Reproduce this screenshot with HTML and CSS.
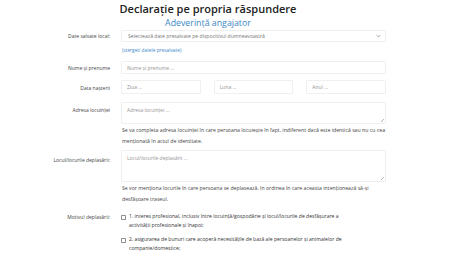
FILE: index.html
```html
<!DOCTYPE html>
<html lang="ro">
<head>
<meta charset="utf-8">
<title>Declarație pe propria răspundere</title>
<link rel="stylesheet" href="styles.css">
</head>
<body>
<div class="page">
  <h1 class="title">Declarație pe propria răspundere</h1>
  <h2 class="subtitle">Adeverință angajator</h2>

  <div class="row row-select">
    <label class="label">Date salvate local:</label>
    <div class="field">
      <div class="select">
        <span>Selectează date presalvate pe dispozitivul dumneavoastră</span>
        <svg class="chev" width="5" height="4" viewBox="0 0 5 4"><path d="M0.6 1 L2.5 2.9 L4.4 1" fill="none" stroke="#666" stroke-width="0.6"/></svg>
      </div>
    </div>
  </div>
  <div class="row row-link">
    <div class="label"></div>
    <div class="field"><a class="link" href="#">(stergeti datele presalvate)</a></div>
  </div>

  <div class="row row-nume">
    <label class="label">Nume și prenume</label>
    <div class="field"><div class="input ph">Nume și prenume ...</div></div>
  </div>

  <div class="row row-data">
    <label class="label">Data nașterii</label>
    <div class="field date">
      <div class="input ph">Ziua ...</div>
      <div class="input ph">Luna ...</div>
      <div class="input ph">Anul ...</div>
    </div>
  </div>

  <div class="row row-adresa">
    <label class="label">Adresa locuinței</label>
    <div class="field"><div class="textarea ta-small ph">Adresa locuinței ...</div></div>
  </div>
  <div class="row">
    <div class="label"></div>
    <div class="field"><p class="help">Se va completa adresa locuinței în care persoana locuiește în fapt, indiferent dacă este identică sau nu cu cea menționată în actul de identitate.</p></div>
  </div>

  <div class="row row-locul">
    <label class="label">Locul/locurile deplasării:</label>
    <div class="field"><div class="textarea ta-big ph">Locul/locurile deplasării ...</div></div>
  </div>
  <div class="row">
    <div class="label"></div>
    <div class="field"><p class="help">Se vor menționa locurile în care persoana se deplasează, în ordinea în care aceasta intenționează să-și desfășoare traseul.</p></div>
  </div>

  <div class="row row-motiv">
    <label class="label">Motivul deplasării:</label>
    <div class="field">
      <div class="check"><span class="box"></span><span class="ctext">1. interes profesional, inclusiv între locuință/gospodărie și locul/locurile de desfășurare a<br>activității profesionale și înapoi;</span></div>
      <div class="check"><span class="box"></span><span class="ctext">2. asigurarea de bunuri care acoperă necesitățile de bază ale persoanelor și animalelor de<br>companie/domestice;</span></div>
    </div>
  </div>
</div>
</body>
</html>
```

FILE: styles.css
```css
html, body {
  margin: 0;
  padding: 0;
  background: #ffffff;
}
body {
  font-family: "Open Sans", "Noto Sans", sans-serif;
  color: #333333;
}
.page {
  width: 356px;
  margin-left: 30px;
  display: flex;
  flex-direction: column;
}
.title {
  margin: 2px 0 0 0;
  font-size: 11px;
  line-height: 14px;
  font-weight: 600;
  color: #222222;
  text-align: center;
}
.subtitle {
  margin: 2px 0 0 0;
  font-size: 8.8px;
  line-height: 11px;
  font-weight: 400;
  color: #3c88c6;
  text-align: center;
}
.row {
  display: grid;
  grid-template-columns: 80px 265px;
  column-gap: 11px;
}
.label {
  text-align: right;
  font-size: 5px;
  color: #444444;
  line-height: 12px;
}
.field {
  font-size: 5px;
}
.row-select { margin-top: 1px; }
.select {
  height: 12px;
  box-sizing: border-box;
  border: 0.5px solid #efefef;
  border-radius: 1px;
  display: flex;
  align-items: center;
  justify-content: space-between;
  padding: 0 4px 0 6px;
  color: #777777;
  font-size: 5.1px;
}
.chev { display: block; }
.row-link { margin-top: 3px; }
.link {
  display: block;
  color: #3c88c6;
  text-decoration: none;
  font-size: 4.8px;
  line-height: 10px;
  padding-left: 1px;
}
.row-nume { margin-top: 6px; }
.row-nume .label { line-height: 14px; }
.input {
  height: 13px;
  box-sizing: border-box;
  border: 0.5px solid #f0f0f0;
  border-radius: 1px;
  padding: 0 5px;
  display: flex;
  align-items: center;
}
.ph { color: #939393; font-size: 5px; }
.row-data { margin-top: 5px; }
.row-data .input { height: 14px; }
.row-data .label { line-height: 16px; }
.date {
  display: grid;
  grid-template-columns: 1fr 1fr 1fr;
  column-gap: 13px;
}
.row-adresa { margin-top: 6px; }
.textarea {
  box-sizing: border-box;
  border: 0.5px solid #f0f0f0;
  border-radius: 1px;
  padding: 4px 5px;
  line-height: 6px;
  position: relative;
}
.textarea::after {
  content: "";
  position: absolute;
  right: 1px;
  bottom: 1px;
  width: 3px;
  height: 3px;
  background: linear-gradient(135deg, transparent 45%, #b5b5b5 45%, #b5b5b5 55%, transparent 55%, transparent 70%, #b5b5b5 70%, #b5b5b5 80%, transparent 80%);
}
.ta-small { height: 22px; }
.ta-big { height: 32px; }
.help {
  margin: 1px 0 4px 0;
  font-size: 5.2px;
  line-height: 10.5px;
  color: #444444;
  padding-left: 1px;
}
.row-adresa .label { line-height: 16px; }
.row-locul .label { line-height: 20px; }
.row-motiv { margin-top: 4px; }
.row-motiv .label { line-height: 10px; }
.check {
  display: flex;
  align-items: flex-start;
  gap: 3px;
  margin-bottom: 5px;
}
.box {
  flex: none;
  width: 5px;
  height: 5px;
  box-sizing: border-box;
  border: 0.6px solid #909090;
  border-radius: 0.8px;
  margin-top: 2.5px;
}
.ctext {
  font-size: 5.1px;
  line-height: 9px;
  color: #333333;
  white-space: nowrap;
}
```
